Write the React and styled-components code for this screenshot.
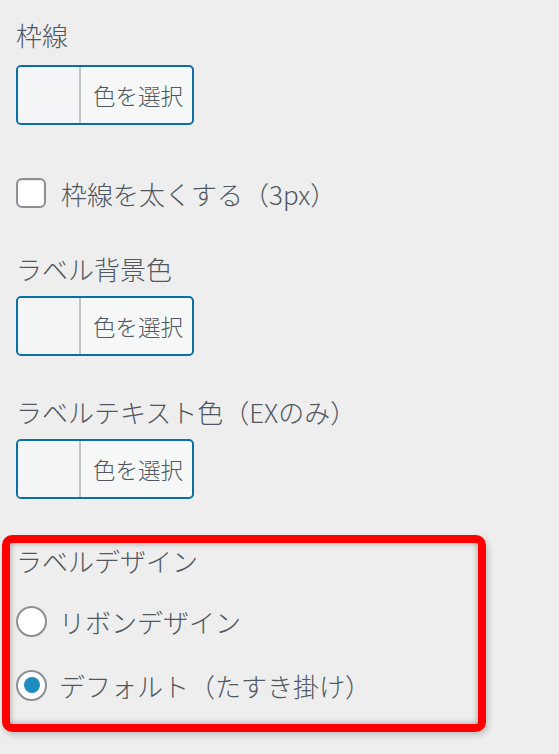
import React from 'react';
import styled, { createGlobalStyle } from 'styled-components';

const Global = createGlobalStyle`
  html, body {
    margin: 0;
    padding: 0;
    background: #eeeeee;
  }
  body {
    font-family: "Noto Sans CJK JP", "Noto Sans", sans-serif;
    font-weight: 300;
    color: #50575e;
  }
`;

const Page = styled.div`
  width: 559px;
  height: 754px;
  box-sizing: border-box;
  padding: 17px 16px 0 16px;
  display: flex;
  flex-direction: column;
  align-items: flex-start;
  overflow: hidden;
`;

const Label = styled.div`
  font-size: 26px;
  line-height: 36px;
  margin-top: ${(p) => p.$top || 0}px;
  margin-bottom: ${(p) => (p.$bottom === undefined ? 9 : p.$bottom)}px;
  white-space: nowrap;
`;

const ColorButton = styled.button`
  display: flex;
  align-items: stretch;
  width: 178px;
  height: 60px;
  padding: 0;
  box-sizing: border-box;
  border: 2px solid #0a70a3;
  border-radius: 5px;
  background: #f6f7f7;
  overflow: hidden;
  font-family: inherit;
  font-weight: 300;
  cursor: pointer;
`;

const Swatch = styled.span`
  width: 61px;
  background: #f4f5f7;
  border-right: 2px solid #c3c4c7;
`;

const ButtonText = styled.span`
  flex: 1;
  display: flex;
  align-items: center;
  padding-left: 12px;
  font-size: 22.5px;
  color: #50575e;
`;

const OptionRow = styled.label`
  display: flex;
  align-items: center;
  height: 36px;
  margin-top: ${(p) => p.$top || 0}px;
  font-size: 26px;
  white-space: nowrap;
  cursor: pointer;
`;

const Box = styled.span`
  width: 30px;
  height: 30px;
  box-sizing: border-box;
  border: 2px solid #8c8f94;
  border-radius: 6px;
  background: #fff;
  box-shadow: inset 0 1px 2px rgba(0, 0, 0, 0.1);
  margin-right: 15px;
  flex-shrink: 0;
`;

const Radio = styled.span`
  width: 31px;
  height: 31px;
  box-sizing: border-box;
  border: 2px solid #8c8f94;
  border-radius: 50%;
  background: #fff;
  margin-right: 12px;
  display: flex;
  align-items: center;
  justify-content: center;
  flex-shrink: 0;

  &::after {
    content: '';
    width: 16px;
    height: 16px;
    border-radius: 50%;
    background: ${(p) => (p.$checked ? '#1e8cbe' : 'transparent')};
  }
`;

const Highlight = styled.div`
  margin-left: -14px;
  margin-top: 36px;
  width: 484px;
  box-sizing: border-box;
  border: 8px solid #ff0000;
  border-radius: 10px;
  padding: 0 6px 21px 6px;
  box-shadow: inset 0 0 6px rgba(0, 0, 0, 0.35), 2px 3px 6px rgba(0, 0, 0, 0.2);
  display: flex;
  flex-direction: column;
  align-items: flex-start;
`;

function ColorPicker() {
  return (
    <ColorButton type="button">
      <Swatch />
      <ButtonText>色を選択</ButtonText>
    </ColorButton>
  );
}

export default function App() {
  return (
    <>
      <Global />
      <Page>
        <Label $bottom={12}>枠線</Label>
        <ColorPicker />

        <OptionRow $top={50}>
          <Box />
          枠線を太くする（3px）
        </OptionRow>

        <Label $top={40} $bottom={9}>ラベル背景色</Label>
        <ColorPicker />

        <Label $top={38} $bottom={9}>ラベルテキスト色（EXのみ）</Label>
        <ColorPicker />

        <Highlight>
          <Label $bottom={0}>ラベルデザイン</Label>
          <OptionRow $top={24}>
            <Radio />
            リボンデザイン
          </OptionRow>
          <OptionRow $top={28}>
            <Radio $checked />
            デフォルト（たすき掛け）
          </OptionRow>
        </Highlight>
      </Page>
    </>
  );
}
